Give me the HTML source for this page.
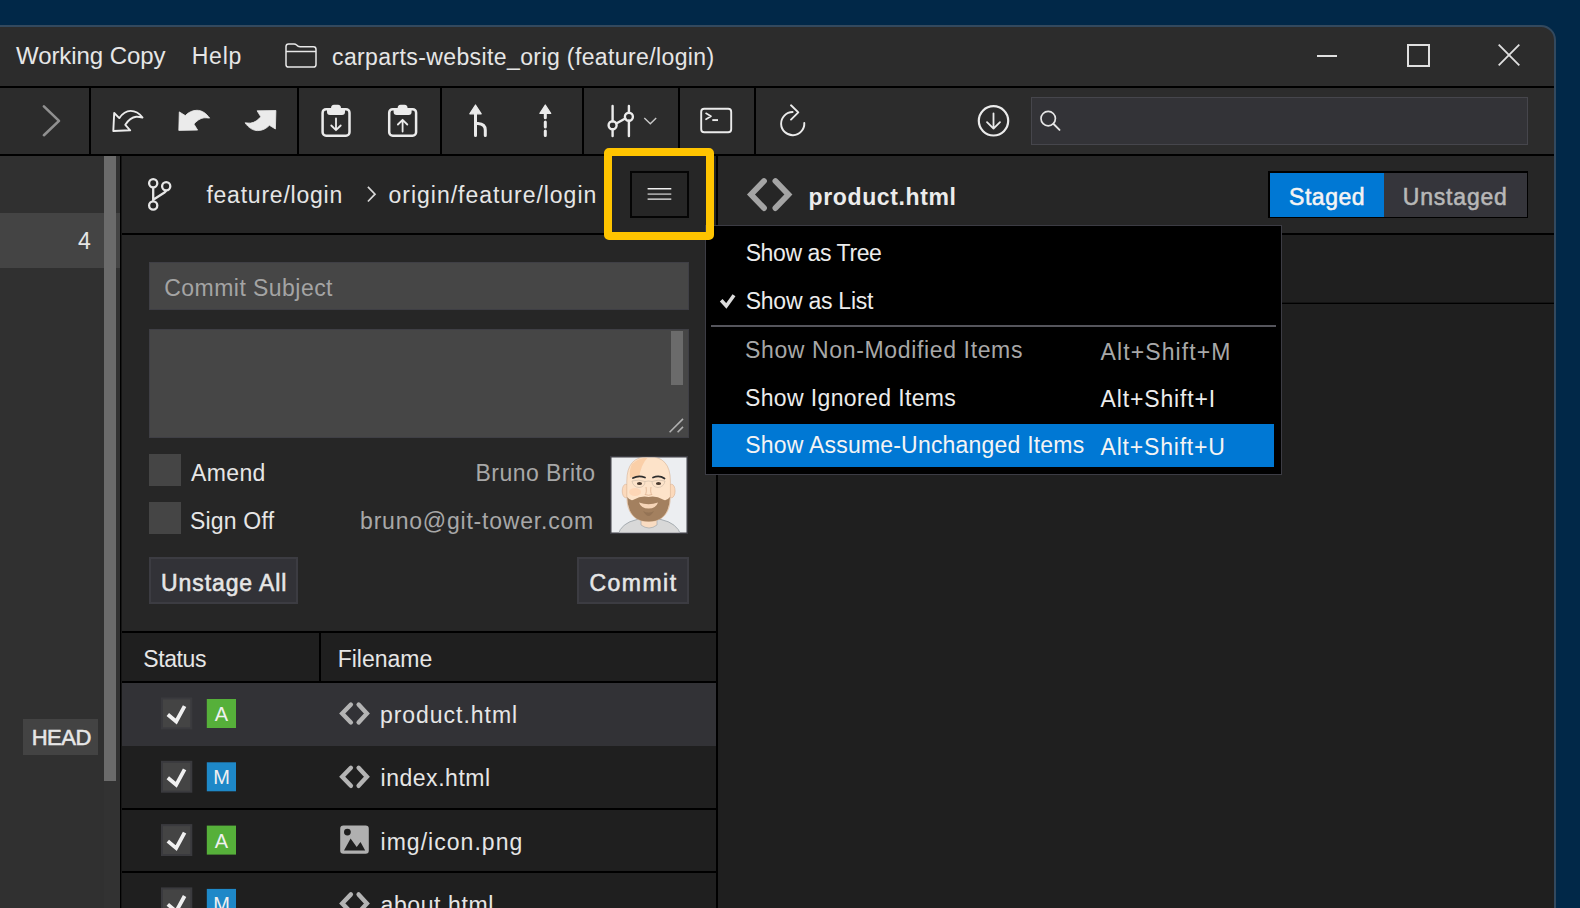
<!DOCTYPE html>
<html><head><meta charset="utf-8">
<style>
*{box-sizing:border-box;margin:0;padding:0}
html,body{width:1580px;height:908px;overflow:hidden;background:#012848;font-family:"Liberation Sans",sans-serif;}
.a{position:absolute}
.t{position:absolute;white-space:nowrap;font-size:23px;line-height:23px;color:#e6e6e6}
.b{-webkit-text-stroke:0.55px currentColor}
svg{position:absolute;overflow:visible}
#win{position:absolute;left:-2px;top:25px;width:1558px;height:900px;background:#2c2c2c;border:2px solid #33495e;border-top-right-radius:15px;overflow:hidden}
.sep{position:absolute;background:#000}
</style></head><body>
<div id="win"></div>

<!-- ============ title bar ============ -->
<div class="t" style="left:16px;top:44px;font-size:24px;line-height:24px;letter-spacing:-0.07px">Working Copy</div>
<div class="t" style="left:191.7px;top:45px;letter-spacing:0.77px">Help</div>
<svg style="left:285px;top:43px" width="32" height="25" viewBox="0 0 32 25"><path d="M1 3.6 Q1 1 3.6 1 H9 Q10.5 1 11.6 2 L12.6 2.9 Q13.7 3.8 15.2 3.8 H28.4 Q31 3.8 31 6.4 V21.4 Q31 24 28.4 24 H3.6 Q1 24 1 21.4 Z M1 8.4 H31" fill="none" stroke="#e8e8e8" stroke-width="1.5"/></svg>
<div class="t" style="left:332px;top:46px;letter-spacing:0.39px">carparts-website_orig (feature/login)</div>
<div class="a" style="left:1317px;top:54.5px;width:20px;height:2px;background:#e0e0e0"></div>
<div class="a" style="left:1407px;top:44px;width:23px;height:23px;border:2px solid #e0e0e0"></div>
<svg style="left:1498px;top:44px" width="22" height="22"><path d="M0.7 0.7 L21.3 21.3 M21.3 0.7 L0.7 21.3" stroke="#e0e0e0" stroke-width="1.8"/></svg>

<!-- ============ toolbar ============ -->
<div class="sep" style="left:0;top:86px;width:1554px;height:2px"></div>
<div class="sep" style="left:0;top:154px;width:1554px;height:2px"></div>
<div class="sep" style="left:89px;top:88px;width:2px;height:66px"></div>
<div class="sep" style="left:297px;top:88px;width:2px;height:66px"></div>
<div class="sep" style="left:440px;top:88px;width:2px;height:66px"></div>
<div class="sep" style="left:582px;top:88px;width:2px;height:66px"></div>
<div class="sep" style="left:678px;top:88px;width:2px;height:66px"></div>
<div class="sep" style="left:754px;top:88px;width:2px;height:66px"></div>

<svg style="left:0;top:0" width="1" height="1">
 <!-- chevron -->
 <path d="M43.9 106.4 L59 120.9 L43.9 135.2" fill="none" stroke="#909090" stroke-width="2.6" stroke-linecap="round" stroke-linejoin="round"/>
 <!-- undo outline -->
 <path d="M114.2 113 L119.3 118.1 C122.5 113.5 126.5 110.9 130.5 110.9 C135 110.9 139.5 113.5 142.5 117.6 C140 116.8 138 116.6 136.2 116.7 C131.5 117.2 128 120.5 125.3 124.8 L130.2 130.3 L113.3 131 Z" fill="none" stroke="#ececec" stroke-width="1.9" stroke-linejoin="round"/>
 <!-- undo filled -->
 <g transform="translate(178.5 110)"><path id="ar" d="M0.8 1.9 L6.8 5.6 C10 2.2 14 0.3 18.4 0.3 C23.5 0.3 28 3.5 31.1 8.1 C29 8 27 7.6 25.5 7.8 C21.5 8.3 18 11 15.4 14.1 L19.1 20.1 L0.3 20.4 Z" fill="#ebebeb" stroke="#ebebeb" stroke-width="0.8" stroke-linejoin="round"/></g>
 <!-- redo filled (rotated) -->
 <g transform="translate(276.2 130.9) rotate(180)"><path d="M0.8 1.9 L6.8 5.6 C10 2.2 14 0.3 18.4 0.3 C23.5 0.3 28 3.5 31.1 8.1 C29 8 27 7.6 25.5 7.8 C21.5 8.3 18 11 15.4 14.1 L19.1 20.1 L0.3 20.4 Z" fill="#ebebeb" stroke="#ebebeb" stroke-width="0.8" stroke-linejoin="round"/></g>
 <!-- clipboard down -->
 <g fill="none" stroke="#ebebeb" stroke-width="2.5">
  <rect x="322.6" y="109.2" width="26.9" height="26.5" rx="3.5"/>
  <rect x="389.2" y="109.2" width="26.9" height="26.5" rx="3.5"/>
 </g>
 <path d="M331 108.5 Q331 104.8 334 104.8 H338 Q341 104.8 341 108.5 H345 V112 Q345 115 342 115 H330 Q327 115 327 112 V108.5 Z" fill="#ebebeb"/>
 <path d="M397.6 108.5 Q397.6 104.8 400.6 104.8 H404.6 Q407.6 104.8 407.6 108.5 H411.6 V112 Q411.6 115 408.6 115 H396.6 Q393.6 115 393.6 112 V108.5 Z" fill="#ebebeb"/>
 <g fill="none" stroke="#ebebeb" stroke-width="1.8" stroke-linecap="round" stroke-linejoin="round">
  <path d="M336 118.5 V130 M331.3 125.5 L336 130.2 L340.7 125.5"/>
  <path d="M402.6 131.5 V120 M397.9 124.5 L402.6 119.8 L407.3 124.5"/>
 </g>
 <!-- branch up (h) -->
 <path d="M475.5 105 L469.8 113.8 L481.2 113.8 Z" fill="#ebebeb" stroke="#ebebeb" stroke-width="1.2" stroke-linejoin="round"/>
 <path d="M475.5 113 V135.5 M475.5 121.8 Q475.5 123.5 478 123.5 Q485.3 124 485.3 130 V135.5" fill="none" stroke="#ebebeb" stroke-width="3" stroke-linecap="round"/>
 <!-- dotted arrow -->
 <path d="M545.3 105 L539.9 113.4 L550.7 113.4 Z" fill="#ebebeb" stroke="#ebebeb" stroke-width="1.2" stroke-linejoin="round"/>
 <path d="M545.3 113 V117.8 M545.3 122 V127 M545.3 131 V135.5" fill="none" stroke="#ebebeb" stroke-width="3" stroke-linecap="round"/>
 <!-- merge/adjust -->
 <g fill="none" stroke="#ebebeb" stroke-width="2.4" stroke-linecap="round">
  <path d="M612.6 106 V121.3 M612.6 129.3 V136 M628.9 106 V112.7 M628.9 120.7 V136 M616.3 123.5 L625.2 118.5"/>
  <circle cx="612.6" cy="125.3" r="4"/>
  <circle cx="628.9" cy="116.7" r="4"/>
 </g>
 <path d="M644.3 118 L650.3 123.8 L656.2 118" fill="none" stroke="#c8c8c8" stroke-width="1.4"/>
 <!-- terminal -->
 <rect x="701.2" y="108.8" width="30" height="23.5" rx="3" fill="none" stroke="#ebebeb" stroke-width="1.9"/>
 <path d="M706 113.3 L711 116.3 L706 119.3" fill="none" stroke="#ebebeb" stroke-width="1.6" stroke-linecap="round" stroke-linejoin="round"/>
 <path d="M712.3 120.1 H718" stroke="#ebebeb" stroke-width="1.9"/>
 <!-- refresh -->
 <path d="M792.6 112 A11.6 11.6 0 1 0 804.3 123" fill="none" stroke="#ebebeb" stroke-width="1.9" stroke-linecap="round"/>
 <path d="M791 105.3 L798.3 112.4 L791 119.6" fill="none" stroke="#ebebeb" stroke-width="1.9" stroke-linecap="round" stroke-linejoin="round"/>
 <!-- download circle -->
 <circle cx="993.5" cy="120.8" r="14.7" fill="none" stroke="#ebebeb" stroke-width="2.2"/>
 <path d="M993.5 113.3 V128.5 M987 122.1 L993.5 128.6 L1000 122.1" fill="none" stroke="#ebebeb" stroke-width="1.8" stroke-linecap="round" stroke-linejoin="round"/>
</svg>

<!-- search -->
<div class="a" style="left:1031px;top:97px;width:497px;height:48px;background:#333337;border:1px solid #46464c"></div>
<svg style="left:0;top:0" width="1" height="1">
 <circle cx="1048.2" cy="118.6" r="7.2" fill="none" stroke="#e6e6e6" stroke-width="1.7"/>
 <path d="M1053.6 124 L1059.5 129.9" stroke="#e6e6e6" stroke-width="1.9" stroke-linecap="round"/>
</svg>

<!-- ============ left sidebar ============ -->
<div class="a" style="left:0;top:156px;width:104px;height:752px;background:#303030"></div>

<div class="a" style="left:104px;top:156px;width:16px;height:752px;background:#323232"></div>
<div class="a" style="left:0;top:212.5px;width:120px;height:55.5px;background:#444"></div>
<div class="t" style="left:78px;top:229.5px">4</div>

<div class="a" style="left:104px;top:156px;width:12px;height:625px;background:#6b6b6b"></div>
<div class="sep" style="left:120px;top:156px;width:1px;height:752px"></div><div class="a" style="left:121px;top:156px;width:1px;height:752px;background:#151515"></div>
<div class="a" style="left:23px;top:719px;width:75px;height:36px;background:#434343"></div>
<div class="t b" style="left:31.7px;top:727.3px;font-size:22px;line-height:22px;letter-spacing:-0.5px">HEAD</div>

<!-- ============ commit panel ============ -->
<div class="a" style="left:122px;top:156px;width:594px;height:752px;background:#262626"></div>
<div class="sep" style="left:122px;top:233px;width:594px;height:2px"></div>
<svg style="left:0;top:0" width="1" height="1">
 <g fill="none" stroke="#e6e6e6" stroke-width="2.3">
  <circle cx="153.2" cy="183.3" r="4.1"/>
  <circle cx="166.2" cy="186.3" r="4.1"/>
  <circle cx="153.2" cy="205.5" r="4.1"/>
  <path d="M153.2 187.2 V201.6 M153.6 199.5 L164.5 192.5 Q166 191.5 166.2 190.2"/>
 </g>
 <path d="M367.9 186.9 L375 194.2 L367.9 201.5" fill="none" stroke="#d8d8d8" stroke-width="1.7"/>
</svg>
<div class="t" style="left:206.4px;top:183.5px;letter-spacing:0.77px">feature/login</div>
<div class="t" style="left:388.6px;top:183.5px;letter-spacing:0.97px">origin/feature/login</div>
<!-- hamburger -->
<div class="a" style="left:630px;top:171px;width:59px;height:47px;border:2px solid #050505;background:#262626"></div>
<svg style="left:0;top:0" width="1" height="1"><path d="M647.6 188.8 H671.3 M647.6 199.1 H671.3" stroke="#f0f0f0" stroke-width="1.4"/><path d="M647.6 194.1 H671.3" stroke="#c0c0c0" stroke-width="1.4"/></svg>


<!-- commit form -->
<div class="a" style="left:149px;top:262px;width:540px;height:48px;background:#464646;border:1px solid #3f3f45"></div>
<div class="t" style="left:164.3px;top:277.3px;letter-spacing:0.45px;color:#a4a4a4">Commit Subject</div>
<div class="a" style="left:149px;top:329px;width:540px;height:109px;background:#464646;border:1px solid #3f3f45"></div>
<div class="a" style="left:671px;top:331px;width:12px;height:53.5px;background:#6b6b6b"></div>
<svg style="left:0;top:0" width="1" height="1"><path d="M669.6 432.3 L683 418.9 M677.6 432.3 L683 426.9" stroke="#b0b0b0" stroke-width="1.6"/></svg>

<div class="a" style="left:149px;top:454px;width:32px;height:32px;background:#454545"></div>
<div class="t" style="left:190.9px;top:462px;letter-spacing:0.4px">Amend</div>
<div class="a" style="left:149px;top:502px;width:32px;height:32px;background:#454545"></div>
<div class="t" style="left:189.9px;top:509.8px;letter-spacing:0.21px">Sign Off</div>
<div class="t" style="left:475.5px;top:462px;letter-spacing:0.46px;color:#a8a8a8">Bruno Brito</div>
<div class="t" style="right:986px;top:510px;letter-spacing:0.79px;color:#a8a8a8">bruno@git-tower.com</div>

<!-- avatar -->
<svg style="left:610px;top:455.5px" width="78" height="78" viewBox="0 0 78 78">
 <defs><clipPath id="av"><rect x="1.5" y="1.5" width="75" height="75"/></clipPath></defs>
 <rect x="0.75" y="0.75" width="76.5" height="76.5" fill="#eceef1" stroke="#3c3c42" stroke-width="1.5"/>
 <g clip-path="url(#av)">
 <path d="M8 79 Q11 67 27 63.5 H51 Q67 67 71 79 Z" fill="#d8d8d8" stroke="#8e969c" stroke-width="0.7"/>
 <path d="M31 60 H47 V69 Q39 75 31 69 Z" fill="#f9dcc2" stroke="#8e969c" stroke-width="0.5"/>
 <ellipse cx="15.8" cy="35" rx="3.6" ry="6.8" fill="#fbd9bb" stroke="#d4a987" stroke-width="0.5"/>
 <ellipse cx="61.5" cy="35" rx="3.6" ry="6.8" fill="#fbd9bb" stroke="#d4a987" stroke-width="0.5"/>
 <path d="M16.8 25 Q16.8 0.5 38.6 0.5 Q60.4 0.5 60.4 25 V40 Q60.4 65.5 38.6 65.5 Q16.8 65.5 16.8 40 Z" fill="#fde3c9" stroke="#d0a888" stroke-width="0.5"/>
 <path d="M22 8 Q28 2 38 1.2 Q31 8 29 22 Q24 20 20 22 Q19 14 22 8 Z" fill="#f9c9a0" opacity="0.8"/>
 <ellipse cx="25" cy="36" rx="6" ry="4" fill="#fdd2b2" opacity="0.8"/>
 <path d="M17.2 41 Q18 65.5 38.6 65.5 Q59 65.5 60 41 Q56 46 53 43.5 Q46 39.5 38.6 41 Q31 39.5 24 43.5 Q21 46 17.2 41 Z" fill="#a3805f"/>
 <path d="M29 46.5 Q38.6 50 48 46.5 Q46 52.5 38.6 52.5 Q31 52.5 29 46.5 Z" fill="#f6d5b8"/>
 <path d="M33 55 Q38.6 58 44 55 Q41 60 38.6 60 Q36 60 33 55 Z" fill="#8a6a4e" opacity="0.6"/>
 <path d="M23 22 Q28.5 19 35 21.5 M43 21.5 Q49.5 19 54.5 22.5" fill="none" stroke="#2d2d2d" stroke-width="1.8" stroke-linecap="round"/>
 <ellipse cx="29.5" cy="27.5" rx="2.6" ry="1.6" fill="#4b3b30"/>
 <ellipse cx="48.5" cy="27.5" rx="2.6" ry="1.6" fill="#4b3b30"/>
 <path d="M22 25 Q29 23 35 25.5 Q35 31 29 31.5 Q23 31 22 25 Z M42 25.5 Q48 23 55 25 Q54 31 48 31.5 Q42 31 42 25.5 Z M35 25.5 Q38.6 24.5 42 25.5" fill="none" stroke="#c9b8a6" stroke-width="0.6"/>
 <path d="M36 31 Q37 37 35 38.5 Q38.6 40 42 38.5 Q40 37 41 31" fill="none" stroke="#d9a987" stroke-width="0.7"/>
 </g>
</svg>

<div class="a" style="left:149px;top:557px;width:149px;height:47px;background:#323237;border:2px solid #3c3c42"></div>
<div class="t b" style="left:161.1px;top:571.9px;letter-spacing:0.89px">Unstage All</div>
<div class="a" style="left:577px;top:557px;width:112px;height:47px;background:#323237;border:2px solid #3c3c42"></div>
<div class="t b" style="left:589.5px;top:571.9px;letter-spacing:1.46px">Commit</div>

<!-- file list -->
<div class="sep" style="left:122px;top:631px;width:594px;height:2px"></div>
<div class="a" style="left:122px;top:633px;width:594px;height:275px;background:#1f1f1f"></div>
<div class="sep" style="left:122px;top:681px;width:594px;height:2px"></div>
<div class="sep" style="left:319px;top:633px;width:2px;height:48px"></div>
<div class="t" style="left:143.3px;top:647.6px;letter-spacing:-0.42px">Status</div>
<div class="t" style="left:337.7px;top:647.6px">Filename</div>
<div class="a" style="left:122px;top:683px;width:594px;height:63px;background:#323236"></div>
<div class="sep" style="left:122px;top:808px;width:594px;height:2px"></div>
<div class="sep" style="left:122px;top:871px;width:594px;height:2px"></div>


<!-- file rows -->
<svg style="left:0;top:0" width="1" height="1">
 <defs>
  <g id="cb"><rect x="1" y="1" width="29.3" height="29.9" fill="#444" stroke="#3a3a3e" stroke-width="2"/><path d="M6.8 17 L15.2 24 L23.6 8.6" fill="none" stroke="#f0f0f0" stroke-width="3.8"/></g>
  <g id="code"><path d="M350.9 704.5 L342.2 713.5 L350.9 722.5 M358.6 704.5 L366.9 713.5 L358.6 722.5" fill="none" stroke="#b4b4b4" stroke-width="4.4" stroke-linecap="round" stroke-linejoin="miter"/></g>
 </defs>
 <use href="#cb" x="161" y="697.5"/>
 <use href="#cb" x="161" y="760.8"/>
 <use href="#cb" x="161" y="824.1"/>
 <use href="#cb" x="161" y="887.4"/>
 <rect x="206.8" y="699" width="29.2" height="29" fill="#56b03a"/>
 <rect x="206.8" y="762.3" width="29.2" height="29" fill="#1e88c8"/>
 <rect x="206.8" y="825.6" width="29.2" height="29" fill="#56b03a"/>
 <rect x="206.8" y="888.9" width="29.2" height="29" fill="#1e88c8"/>
 <use href="#code"/>
 <use href="#code" y="63.3"/>
 <use href="#code" y="189.9"/>
 <rect x="340.2" y="825.5" width="28.6" height="28.3" rx="3.2" fill="#b0b0b0"/>
 <circle cx="347.4" cy="832.1" r="3.4" fill="#1f1f1f"/>
 <path d="M344 850.5 L350.6 838.4 L356.7 846.9 L360.5 842 L365.2 850.5 Z" fill="#1f1f1f"/>
</svg>
<div class="t" style="left:207px;top:704px;width:29px;text-align:center;font-size:20px;line-height:20px;color:#f0f0f0">A</div>
<div class="t" style="left:207px;top:767.3px;width:29px;text-align:center;font-size:20px;line-height:20px;color:#f0f0f0">M</div>
<div class="t" style="left:207px;top:830.6px;width:29px;text-align:center;font-size:20px;line-height:20px;color:#f0f0f0">A</div>
<div class="t" style="left:207px;top:893.9px;width:29px;text-align:center;font-size:20px;line-height:20px;color:#f0f0f0">M</div>
<div class="t" style="left:379.9px;top:703.6px;letter-spacing:0.98px">product.html</div>
<div class="t" style="left:380.5px;top:767px;letter-spacing:0.53px">index.html</div>
<div class="t" style="left:380.5px;top:830.7px;letter-spacing:1.03px">img/icon.png</div>
<div class="t" style="left:380.5px;top:894px;letter-spacing:0.6px">about.html</div>

<div class="sep" style="left:716px;top:156px;width:2px;height:752px"></div>

<!-- ============ right panel ============ -->
<div class="a" style="left:718px;top:156px;width:836px;height:752px;background:#1f1f1f"></div>
<div class="a" style="left:718px;top:156px;width:836px;height:77px;background:#262626"></div>
<div class="sep" style="left:718px;top:233px;width:836px;height:2px"></div>
<div class="a" style="left:718px;top:302px;width:836px;height:1px;background:#141414"></div><div class="sep" style="left:718px;top:303px;width:836px;height:1px"></div>


<svg style="left:0;top:0" width="1" height="1">
 <path d="M764 181 L751 194.5 L764 208.1 M775.4 181 L788.4 194.5 L775.4 208.1" fill="none" stroke="#a4a4a4" stroke-width="5.8" stroke-linecap="round" stroke-linejoin="miter"/>
</svg>
<div class="t" style="left:808.6px;top:185.8px;font-weight:bold;letter-spacing:0.62px;color:#ececec">product.html</div>
<div class="a" style="left:1268px;top:171px;width:260px;height:47px;background:#000"></div>
<div class="a" style="left:1269.5px;top:172.5px;width:114px;height:44px;background:#0078d4"></div>
<div class="a" style="left:1383.5px;top:172.5px;width:143px;height:44px;background:#35353b"></div>
<div class="t b" style="left:1289px;top:186.3px;letter-spacing:0.54px;color:#f4f4f4">Staged</div>
<div class="t b" style="left:1402.8px;top:186.3px;letter-spacing:0.8px;color:#b8b8b8">Unstaged</div>

<!-- ============ dropdown menu ============ -->
<div class="a" style="left:705px;top:224.5px;width:576.5px;height:250px;background:#000;border:1.8px solid #3c3c44"></div>
<div class="a" style="left:711px;top:325px;width:565px;height:2px;background:#55555c"></div>
<div class="a" style="left:712px;top:423.5px;width:561.5px;height:43px;background:#0078d4"></div>
<svg style="left:0;top:0" width="1" height="1"><path d="M721.2 300.3 L726.3 306 L734 295.3" fill="none" stroke="#dcdcdc" stroke-width="3.6"/></svg>
<div class="t" style="left:745.7px;top:242.4px;letter-spacing:-0.41px;color:#ececec">Show as Tree</div>
<div class="t" style="left:745.7px;top:289.7px;letter-spacing:-0.24px;color:#ececec">Show as List</div>
<div class="t" style="left:745px;top:339px;letter-spacing:0.64px;color:#a8a8a8">Show Non-Modified Items</div>
<div class="t" style="left:1100.6px;top:340.5px;letter-spacing:1.09px;color:#a8a8a8">Alt+Shift+M</div>
<div class="t" style="left:745px;top:386.5px;letter-spacing:0.37px;color:#ececec">Show Ignored Items</div>
<div class="t" style="left:1100.6px;top:388px;letter-spacing:0.84px;color:#ececec">Alt+Shift+I</div>
<div class="t" style="left:745.3px;top:434.2px;letter-spacing:0.2px;color:#f4f4f4">Show Assume-Unchanged Items</div>
<div class="t" style="left:1100.6px;top:435.7px;letter-spacing:0.79px;color:#f4f4f4">Alt+Shift+U</div>

<div class="a" style="left:604px;top:147.7px;width:109.5px;height:92.8px;border:8.2px solid #ffc400;border-radius:5px"></div>
</body></html>
